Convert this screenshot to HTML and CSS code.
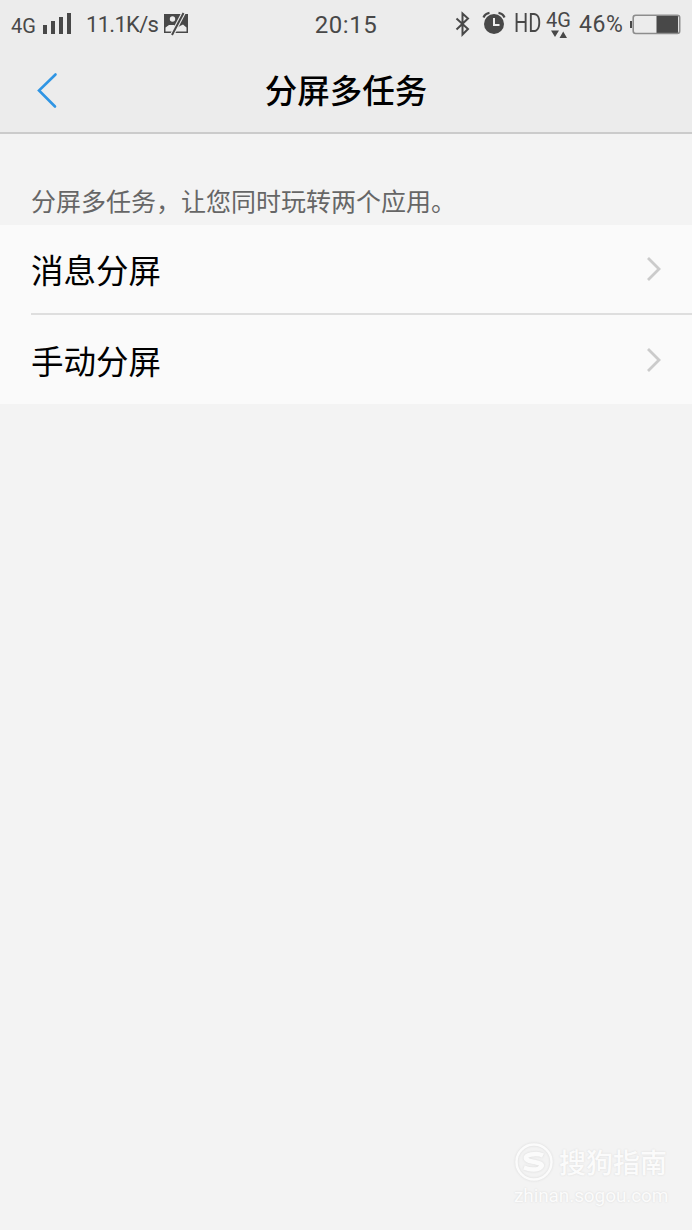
FILE: index.html
```html
<!DOCTYPE html>
<html lang="zh-CN">
<head>
    <meta charset="UTF-8">
    <title>分屏多任务</title>
    <link rel="stylesheet" href="styles.css">
</head>
<body>
    <header class="header">
        <div class="status-bar">
            <div class="status-left">
                <span class="network">4G</span>
                <svg class="signal" width="28" height="22" viewBox="0 0 28 22">
                    <path d="M0 12h4v9H0zM8 8h4v13H8zM16 4h4v17h-4zM24 0h4v21h-4z"/>
                </svg>
                <span class="speed">11.1K/s</span>
                <svg class="picture" width="26" height="24" viewBox="0 0 26 24">
                    <path class="fill" d="M1 2h24v19H1z"/>
                    <path class="cut" d="M2.500 19.500v-4l3.500-2.500h5l3 3 3-2 3-1.500 3.500 3v4z"/>
                    <circle class="cut" cx="9.500" cy="7" r="2.700"/>
                    <path class="slash-bg" d="M9 23L20.500 1"/>
                    <path class="slash" d="M9 23L20.500 1"/>
                </svg>
            </div>
            <span class="clock">20:15</span>
            <div class="status-right">
                <svg class="bluetooth" width="16" height="26" viewBox="0 0 16 26">
                    <path d="M1.500 7.500L13 18l-5.500 5.500v-21L13 7.500 1.500 18.500"/>
                </svg>
                <svg class="alarm" width="24" height="24" viewBox="0 0 24 24">
                    <circle cx="12" cy="13" r="10"/>
                    <path class="bell" d="M1.500 6.500Q3 2.500 7.500 1.800M22.500 6.500Q21 2.500 16.500 1.800"/>
                    <path class="hands" d="M12 7v7h5.500"/>
                </svg>
                <span class="hd">HD</span>
                <div class="data">
                    <span>4G</span>
                    <svg width="18" height="8" viewBox="0 0 18 8">
                        <path d="M1 .5h8L5 7zM9.500 8h7.500L13.200 1.500z"/>
                    </svg>
                </div>
                <span class="percent">46%</span>
                <svg class="battery" width="51" height="21" viewBox="0 0 51 21">
                    <path class="level" d="M0 7h2v7H0zM26.500 2H48v17H26.500z"/>
                    <rect class="shell" x="3.200" y="1.200" width="46.500" height="18.300" rx="2.500"/>
                </svg>
            </div>
        </div>
        <div class="title-bar">
            <svg class="back" width="24" height="38" viewBox="0 0 24 38">
                <path d="M21.500 3.500L5 19.500l16 16"/>
            </svg>
            <h1>分屏多任务</h1>
        </div>
    </header>

    <main>
        <p class="tip">分屏多任务，让您同时玩转两个应用。</p>
        <ul class="list">
            <li class="item">
                <span>消息分屏</span>
                <svg class="arrow" width="16" height="26" viewBox="0 0 16 26">
                    <path d="M2 2l11 11L2 24"/>
                </svg>
            </li>
            <li class="item">
                <span>手动分屏</span>
                <svg class="arrow" width="16" height="26" viewBox="0 0 16 26">
                    <path d="M2 2l11 11L2 24"/>
                </svg>
            </li>
        </ul>
    </main>

    <footer class="watermark">
        <div class="brand">
            <svg width="40" height="40" viewBox="0 0 40 40">
                <circle cx="20" cy="20" r="17.500"/>
                <path d="M29 13.500Q24 11 17 12.500C10 14 10 18 18 19.500C27 21 31 23 25 26.500Q19 29 10 25.500"/>
            </svg>
            <span>搜狗指南</span>
        </div>
        <div class="site">zhinan.sogou.com</div>
    </footer>
</body>
</html>
```

FILE: styles.css
```css
* {
    box-sizing: border-box;
}

body {
    margin: 0;
    height: 1230px;
    display: flex;
    flex-direction: column;
    background: #f3f3f3;
    color: #000;
    font-family: Roboto, 'Noto Sans CJK SC', sans-serif;
    overflow: hidden;
}

svg {
    display: block;
    flex: none;
}

.header {
    height: 134px;
    background: #ececec;
    border-bottom: 2px solid #cbcbcb;
}

/* status bar */
.status-bar {
    height: 46px;
    padding: 0 11px;
    display: grid;
    grid-template-columns: 1fr auto 1fr;
    color: #484848;
    fill: #484848;
    line-height: 46px;
    white-space: nowrap;
}

.status-left,
.status-right {
    height: 48px;
    display: flex;
    align-items: center;
}

.status-right {
    justify-content: flex-end;
}

.network {
    width: 32px;
    font-size: 20px;
    padding-top: 4px;
}

.signal {
    margin-right: 15px;
}

.speed {
    width: 77px;
    font-size: 22px;
    letter-spacing: -0.7px;
    padding-top: 1px;
}

.picture .cut {
    fill: #ececec;
}

.picture .slash-bg {
    stroke: #ececec;
    stroke-width: 4.2;
}

.picture .slash {
    stroke: #484848;
    stroke-width: 2;
}

.clock {
    font-size: 24px;
    letter-spacing: 0.5px;
    padding-top: 2px;
}

.bluetooth {
    margin-right: 11px;
    fill: none;
    stroke: #484848;
    stroke-width: 2;
}

.alarm {
    margin: -2px 8px 0 0;
}

.alarm .bell {
    fill: none;
    stroke: #484848;
    stroke-width: 2.2;
}

.alarm .hands {
    fill: none;
    stroke: #ececec;
    stroke-width: 2;
}

.hd {
    width: 32px;
    font-size: 25px;
    transform: scaleX(0.8);
    transform-origin: left;
}

.data {
    width: 33px;
    font-size: 20px;
    line-height: 20px;
}

.data span {
    display: block;
    margin-top: -1px;
}

.data svg {
    margin: 0 0 0 4px;
}

.percent {
    width: 51px;
    font-size: 23px;
    letter-spacing: 0.6px;
    padding-top: 1px;
}

.battery .shell {
    fill: none;
    stroke: #8d8d8d;
    stroke-width: 1.6;
}

/* title */
.title-bar {
    height: 88px;
    padding: 0 34px;
    display: grid;
    grid-template-columns: 24px 1fr 24px;
    align-items: center;
}

.back {
    fill: none;
    stroke: #2f95e4;
    stroke-width: 2.6;
    stroke-linecap: round;
}

h1 {
    margin: -3px 0 0;
    font-size: 32.5px;
    font-weight: 500;
    text-align: center;
}

.tip {
    margin: 0;
    height: 91px;
    padding: 48px 31px 0;
    color: #666;
    font-size: 25px;
    line-height: 36px;
    font-family: 'Noto Sans CJK SC', sans-serif;
    font-weight: 400;
    white-space: nowrap;
}

/* list */
.list {
    margin: 0;
    padding: 0 0 0 31px;
    list-style: none;
    background: #fafafa;
}

.item {
    height: 88px;
    padding-right: 30px;
    display: flex;
    align-items: center;
    justify-content: space-between;
    font-size: 32.5px;
}

.item + .item {
    height: 91px;
    border-top: 2px solid #dedede;
}

.item span {
    margin-top: -1px;
}

.arrow {
    fill: none;
    stroke: #cbcbcb;
    stroke-width: 2.8;
}

/* watermark */
.watermark {
    width: 178px;
    margin: auto 0 23px auto;
    color: #fbfbfb;
    text-shadow: 0 0 2px #d8d8d8;
}

.brand {
    display: flex;
    align-items: center;
    height: 46px;
    font-size: 27px;
    font-weight: 500;
}

.brand span {
    margin-top: -1px;
}

.brand svg {
    margin-right: 5px;
    fill: none;
    stroke: #fbfbfb;
    stroke-width: 2.5;
    filter: drop-shadow(0 0 1px #d8d8d8);
}

.brand path {
    stroke-width: 4.5;
}

.site {
    font-size: 19px;
    line-height: 22px;
    letter-spacing: -0.1px;
}
```
